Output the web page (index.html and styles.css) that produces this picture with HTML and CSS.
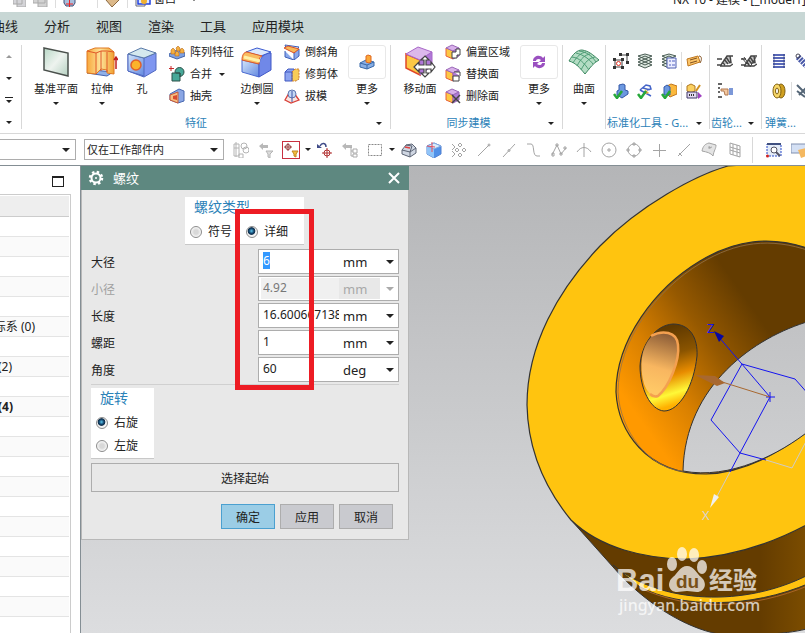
FILE: index.html
```html
<!DOCTYPE html>
<html lang="zh-CN">
<head>
    <meta charset="UTF-8">
    <meta name="viewport" content="width=device-width, initial-scale=1.0">
    <title>NX 10 - 建模</title>
    <link rel="stylesheet" href="styles.css">
</head>
<body>

    <!-- Shared icons -->
    <svg class="defs" width="0" height="0">
        <defs>
            <linearGradient id="blueFace" x1="0" y1="0" x2="1" y2="1">
                <stop offset="0" stop-color="#d4e6fa"/><stop offset="1" stop-color="#6288e0"/>
            </linearGradient>
            <linearGradient id="goldFace" x1="0" y1="0" x2="1" y2="0">
                <stop offset="0" stop-color="#f8a73c"/><stop offset=".5" stop-color="#fde39a"/><stop offset="1" stop-color="#f0a030"/>
            </linearGradient>
            <linearGradient id="greenFace" x1="0" y1="0" x2="1" y2="1">
                <stop offset="0" stop-color="#b8d8c6"/><stop offset=".5" stop-color="#eef3ef"/><stop offset="1" stop-color="#b4d0c0"/>
            </linearGradient>
        </defs>
        <symbol id="caret" viewBox="0 0 6 3"><path d="M0 0h6L3 3z" fill="currentColor"/></symbol>
        <symbol id="caret-big" viewBox="0 0 8 4"><path d="M0 0h8L4 4z" fill="currentColor"/></symbol>
        <symbol id="face" viewBox="0 0 16 16">
            <path d="M1 4l7 3v8l-7-3z" fill="#fdc844" stroke="#e8603c"/>
            <path d="M1 4l6-3 7 3-6 3z" fill="#d8b0ea" stroke="#9a68b8"/>
            <path d="M8 7l6-3v8l-6 3z" fill="#b07cd8" stroke="#9a68b8"/>
        </symbol>
        <symbol id="layers" viewBox="0 0 16 16">
            <path d="M1 12l7-3 7 3-7 3zM1 9l7-3 7 3-7 3zM1 6l7-3 7 3-7 3zM1 3l7-2 7 2-7 3z" fill="#dde8e0" stroke="#4a5c54"/>
        </symbol>
        <symbol id="check" viewBox="0 0 16 16"><path d="M1 11l3 4 5-7" fill="none" stroke="#26a83a" stroke-width="2.5"/></symbol>
        <symbol id="gear-wheel" viewBox="0 0 16 16">
            <path d="M5 11L10 3h4l1 8z" fill="#c4c4c4"/>
            <path d="M0 12h4l6-9h6M3 13h10l3-2M5 9l3 3M7 6l4 5M9 4l4 6M0 6h5M13 3l1 7" fill="none" stroke="#444" stroke-width="1.400"/>
        </symbol>
    </svg>

    <!-- Title bar -->
    <header class="titlebar">
        <div class="quick-tools">
            <svg width="13" height="16" viewBox="0 0 13 16"><path d="M0 3h9v10H0zM4 6h9v10H4z" fill="#d4d4d8" stroke="#aaa"/></svg>
            <svg width="15" height="16" viewBox="0 0 15 16"><path d="M0 3h12v9H0zM5 7h9v9H5z" fill="#d2d2d2" stroke="#aaa"/></svg>
            <i class="divider"></i>
            <svg width="13" height="16" viewBox="0 0 13 16"><path d="M1 5h11v7l-2 3H3l-2-3z" fill="#a9bfdd" stroke="#405078"/><path d="M6.500 6v10M3 13h7" stroke="#e22"/></svg>
            <i class="divider wide"></i>
            <svg width="15" height="16" viewBox="0 0 15 16"><path d="M1 9l6-4 7 4-7 7z" fill="#dcb98a" stroke="#8a6840"/></svg>
            <i class="divider"></i>
            <span class="window-menu">
                <svg width="16" height="16" viewBox="0 0 16 16"><path d="M3 2h12v11H3z" fill="#dfe8ff" stroke="#2040e0" stroke-width="1.500"/><path d="M1 7v8h9v-3" fill="none" stroke="#667"/><circle cx="9" cy="10" r="3" fill="#f0b030"/></svg>
                窗口
            </span>
            <svg class="caret" width="6" height="3"><use href="#caret"/></svg>
        </div>
        <span class="app-title">NX 10 - 建模 - [_model1]</span>
    </header>

    <!-- Menu tabs -->
    <nav class="menu">
        <a href="#" class="cut">曲线</a>
        <a href="#">分析</a>
        <a href="#">视图</a>
        <a href="#">渲染</a>
        <a href="#">工具</a>
        <a href="#">应用模块</a>
    </nav>

    <!-- Ribbon -->
    <div class="ribbon">
        <section class="group gallery">
            <button aria-label="上"><svg class="caret up" width="6" height="3"><use href="#caret"/></svg></button>
            <button aria-label="下"><svg class="caret" width="6" height="3"><use href="#caret"/></svg></button>
            <button aria-label="展开"><svg width="8" height="7" viewBox="0 0 8 7"><path d="M0 0h8v1H0zM1 3h6L4 6z" fill="#222"/></svg></button>
            <button aria-label="选项"><svg class="caret" width="6" height="3"><use href="#caret"/></svg></button>
        </section>

        <section class="group feature">
            <div class="tools">
                <button class="large">
                    <span class="pic"><svg width="32" height="32" viewBox="0 0 32 32"><path d="M4 2l24 5v23L4 24z" fill="url(#greenFace)" stroke="#4a504c" stroke-width="1.500"/></svg></span>
                    <span>基准平面</span>
                    <svg class="caret" width="6" height="3"><use href="#caret"/></svg>
                </button>
                <button class="large">
                    <span class="pic"><svg width="32" height="32" viewBox="0 0 32 32"><path d="M1 27l6-3 20 2-6 4z" fill="#90b0e8" stroke="#4464b0"/><path d="M1 5l8-3h14l5 4v22l-7-1v-3l-6-1-5 5-9-1z" fill="url(#goldFace)" stroke="#e07820"/><path d="M1 5l9 2 5-2h6l7 1M10 7v21M15 5v20M21 6v20" fill="none" stroke="#e05828"/><path d="M30 23V12M28 14l2-3 2 3" fill="none" stroke="#c02020" stroke-width="1.500"/></svg></span>
                    <span>拉伸</span>
                    <svg class="caret" width="6" height="3"><use href="#caret"/></svg>
                </button>
                <button class="large narrow">
                    <span class="pic"><svg width="32" height="32" viewBox="0 0 32 32"><path d="M2 8l16 4 12-5v17l-12 7-16-6z" fill="#7f96f0" stroke="#5068c0"/><path d="M2 8l16 4v18L2 25z" fill="url(#blueFace)" stroke="#5068c0"/><path d="M2 8l13-6 15 5-12 5z" fill="#d4e8ee" stroke="#5878a8"/><circle cx="10" cy="19" r="5" fill="#fbb32c" stroke="#e0602c" stroke-width="1.500"/></svg></span>
                    <span>孔</span>
                </button>
                <div class="stack">
                    <button class="small"><svg width="16" height="16" viewBox="0 0 16 16"><path d="M0 10l8-4 8 3v3l-8 3-8-3z" fill="#7ea0e0" stroke="#4464a8"/><path d="M2 6l2-2 2 2v4H2zM6 9l2-2 2 2v3H6zM7 4l2-2 2 2v3H8zM11 6l2-2 2 2v3h-4z" fill="#f4b040" stroke="#b86c20" stroke-width=".6"/></svg>阵列特征</button>
                    <button class="small"><svg width="16" height="16" viewBox="0 0 16 16"><circle cx="10.500" cy="6" r="4.500" fill="#48a898" stroke="#2c5048"/><path d="M3 7h8v8H3z" fill="#48a898" stroke="#2c5048"/><path d="M7 7h4v4" fill="none" stroke="#2c5048"/><path d="M2 0v5M0 2.500h5" stroke="#c82828"/></svg>合并<svg class="caret" width="6" height="3"><use href="#caret"/></svg></button>
                    <button class="small"><svg width="16" height="16" viewBox="0 0 16 16"><path d="M1 6l9-5 5 2v10l-6 2-8-3z" fill="#8aa6e4" stroke="#4868b0"/><path d="M1 7l8-3v11l-8-3z" fill="#f8c080" stroke="#c85838"/><path d="M4 8l4-1v5l-4-1z" fill="#d84c30"/></svg>抽壳</button>
                </div>
                <button class="large">
                    <span class="pic"><svg width="32" height="32" viewBox="0 0 32 32"><path d="M1 14v12l17 5V18z" fill="url(#blueFace)" stroke="#4868d0"/><path d="M18 18c1-6 5-11 12-11v17l-12 7z" fill="#7088e8" stroke="#4058c8"/><path d="M5 6l11-4 14 4-10 4z" fill="#dce8fc" stroke="#3858d0"/><path d="M1 14c0-5 2-8 5-8l15 4c-3 1-3 4-3 8z" fill="#f9bb60" stroke="#e05828"/><path d="M3 11l16 4" stroke="#fff1a8" stroke-width="3"/></svg></span>
                    <span>边倒圆</span>
                    <svg class="caret" width="6" height="3"><use href="#caret"/></svg>
                </button>
                <div class="stack second">
                    <button class="small"><svg width="16" height="16" viewBox="0 0 16 16"><path d="M1 7v6l9 3V8l5-3v7l-5 4" fill="#8aa8ec" stroke="#4060b8"/><path d="M1 1l14 2-4 4-9-3z" fill="#dce8f8" stroke="#4060b8"/><path d="M0 4l4-2 11 3-5 4z" fill="#f8b858" stroke="#d85028"/></svg>倒斜角</button>
                    <button class="small"><svg width="16" height="16" viewBox="0 0 16 16"><path d="M1 6l3-3h6v10l-2 2H1z" fill="#8ca4f0" stroke="#4058c0"/><path d="M8 6l3-3h4v10l-3 2H8z" fill="#f8cc58" stroke="#c87830" stroke-dasharray="2 1"/><path d="M1 6h7v9" fill="none" stroke="#4058c0"/></svg>修剪体</button>
                    <button class="small"><svg width="16" height="16" viewBox="0 0 16 16"><path d="M5 5L1 12l6 3 8-3-5-7" fill="#f8e4e0" stroke="#d84038" stroke-width="1.300"/><circle cx="8" cy="6" r="4" fill="#c4d8f4" stroke="#6078b0"/><path d="M8 3v11" stroke="#4058a8"/></svg>拔模</button>
                </div>
                <button class="large more">
                    <span class="pic"><svg width="16" height="16" viewBox="0 0 16 16"><path d="M1 9l6-3 8 2v4l-7 3-7-2z" fill="#88aee4" stroke="#3868a8"/><path d="M1 9l7 2 7-3M8 11v4" fill="none" stroke="#3868a8"/><path d="M7 2l2-1 3 1v6l-2 1-3-1z" fill="#fba838" stroke="#e06820"/></svg></span>
                    <span>更多</span>
                    <svg class="caret" width="6" height="3"><use href="#caret"/></svg>
                </button>
            </div>
            <footer><span>特征</span><button aria-label="特征选项"><svg class="caret" width="6" height="3"><use href="#caret"/></svg></button></footer>
        </section>

        <section class="group sync">
            <div class="tools">
                <button class="large">
                    <span class="pic"><svg width="32" height="32" viewBox="0 0 32 32"><path d="M2 8l14 6v15L2 22z" fill="#fdc844" stroke="#e04828" stroke-width="1.500"/><path d="M2 8l12-7 14 5-12 8z" fill="#dcb8ec" stroke="#a868c8"/><path d="M16 14l12-8v14l-12 9z" fill="#b078d8" stroke="#a868c8"/><path d="M21 10l4 4h-3v5h5v-3l4 5-4 5v-3h-5v4h3l-4 4-4-4h3v-4h-5v3l-5-5 5-5v3h5v-5h-3z" fill="#fff" stroke="#444" stroke-width="1.200"/></svg></span>
                    <span>移动面</span>
                </button>
                <div class="stack">
                    <button class="small"><svg width="16" height="16" viewBox="0 0 16 16"><use href="#face"/><path d="M7 8h4V5h4v6h-3v3H7z" fill="#fff" stroke="#444"/></svg>偏置区域</button>
                    <button class="small"><svg width="16" height="16" viewBox="0 0 16 16"><use href="#face"/><path d="M8 10h6v5H8zM9 6h6v4" fill="#fff" stroke="#444"/></svg>替换面</button>
                    <button class="small"><svg width="16" height="16" viewBox="0 0 16 16"><use href="#face"/><path d="M7 7l8 8M15 7l-8 8" stroke="#444" stroke-width="1.500"/></svg>删除面</button>
                </div>
                <button class="large more">
                    <span class="pic"><svg width="16" height="16" viewBox="0 0 16 16"><path d="M2 7c0-5 7-7 10-3l2-2v6H8l2-2C8 4 5 5 5 7zM14 9c0 5-7 7-10 3l-2 2V8h6l-2 2c2 2 5 1 5-1z" fill="#9a50c0"/></svg></span>
                    <span>更多</span>
                    <svg class="caret" width="6" height="3"><use href="#caret"/></svg>
                </button>
            </div>
            <footer><span>同步建模</span><button aria-label="同步建模选项"><svg class="caret" width="6" height="3"><use href="#caret"/></svg></button></footer>
        </section>

        <section class="group surface">
            <div class="tools">
                <button class="large">
                    <span class="pic"><svg width="32" height="32" viewBox="0 0 32 32"><path d="M1 15C5 8 9 4 14 4c7 1 11 5 17 10-6 3-9 8-14 14C12 22 8 17 1 15z" fill="#b4dcc4" stroke="#3c8860"/><path d="M4 11c8 1 12 6 17 13M8 7c8 2 13 6 17 11M11 5c8 1 13 5 17 11M5 17C9 10 13 7 18 6M9 20C13 12 17 9 22 8M13 24c4-8 8-12 14-13" fill="none" stroke="#4c9c74"/></svg></span>
                    <span>曲面</span>
                    <svg class="caret" width="6" height="3"><use href="#caret"/></svg>
                </button>
            </div>
        </section>

        <section class="group standard">
            <div class="tools icon-grid">
                <div class="icon-row">
                    <button aria-label="属性"><svg width="16" height="16" viewBox="0 0 16 16"><path d="M2 7h7v7H2zM8 2h6v7" fill="none" stroke="#444"/><path d="M0 5h3v3H0zM8 5h3v3H8zM0 13h3v3H0zM8 13h3v3H8zM6 0h3v3H6zM13 0h3v3h-3zM13 8h3v3h-3z" fill="#333"/><circle cx="5.500" cy="10.500" r="2" fill="#fff" stroke="#e03020"/></svg></button>
                    <button aria-label="图层"><svg width="16" height="16"><use href="#layers"/></svg></button>
                    <button aria-label="图层设置"><svg width="16" height="16" viewBox="0 0 16 16"><use href="#layers"/><path d="M6 5h9v10H6z" fill="#eceeff" stroke="#5060b0"/><path d="M8 8h2M11 8h3M8 12h2M11 12h3" stroke="#5060c0"/></svg></button>
                    <i class="divider"></i>
                    <button aria-label="注释"><svg width="16" height="16" viewBox="0 0 16 16"><path d="M1 6l11-3 2 6-12 4z" fill="#fbc468" stroke="#c07820"/><path d="M4 7l7-2M4 10l7-2M13 3c3 0 3 4 1 7" fill="none" stroke="#805020"/></svg></button>
                </div>
                <div class="icon-row">
                    <button aria-label="检查部件"><svg width="16" height="16" viewBox="0 0 16 16"><path d="M6 2l4-1 2 1v5l3 1v3l-6 4-5-3V8l2-1z" fill="#6c98e0" stroke="#3458a8"/><use href="#check"/></svg></button>
                    <button aria-label="检查尺寸"><svg width="16" height="16" viewBox="0 0 16 16"><path d="M3 7l6-5 4 1 1 3-4 1M3 7l11 6M6 5l7 2" fill="none" stroke="#4464c8" stroke-width="1.500"/><path d="M8 6l4 4-3 1z" fill="#f0b040"/><use href="#check"/></svg></button>
                    <button aria-label="检查装配"><svg width="16" height="16" viewBox="0 0 16 16"><path d="M6 3l4-2 6 2v8l-7 3-3-3z" fill="#fbb83c" stroke="#c07820"/><path d="M3 4l3-2 3 2v8H3z" fill="#6c98e0" stroke="#3458a8"/><use href="#check"/></svg></button>
                    <i class="divider"></i>
                    <button aria-label="重命名"><svg width="16" height="16" viewBox="0 0 16 16"><path d="M1 3l4-2 4 2v5l-4 2-4-2z" fill="#fbd060" stroke="#b07820"/><path d="M10 8l4-6" stroke="#d09020" stroke-width="2"/><path d="M1 9h10v6H1z" fill="#e0d8f0" stroke="#403868"/><path d="M3 12h6" stroke="#333" stroke-width="2" stroke-dasharray="1 1"/><path d="M12 9l4 4-4 3z" fill="#a040c0"/></svg></button>
                </div>
            </div>
            <footer><span>标准化工具 - G...</span><button aria-label="标准化工具选项"><svg class="caret" width="6" height="3"><use href="#caret"/></svg></button></footer>
        </section>

        <section class="group gear">
            <div class="tools icon-grid">
                <div class="icon-row">
                    <button aria-label="圆柱齿轮"><svg width="16" height="16"><use href="#gear-wheel"/></svg></button>
                    <button aria-label="锥齿轮"><svg width="16" height="16" viewBox="0 0 16 16"><use href="#gear-wheel"/><path d="M1 5l5 6M3 4l6 9M15 4L9 14" stroke="#444"/></svg></button>
                </div>
                <div class="icon-row">
                    <button aria-label="齿轮列表"><svg width="16" height="16" viewBox="0 0 16 16"><path d="M1 1h4M1 5h2M1 9h2M1 14h4" stroke="#333" stroke-width="1.500"/><path d="M4 6h7v6H8L7 8H4z" fill="#f4c8a0" stroke="#b07850"/><path d="M12 5h4v7h-4z" fill="#7c98d8"/></svg></button>
                </div>
            </div>
            <footer><span>齿轮...</span><button aria-label="齿轮选项"><svg class="caret" width="6" height="3"><use href="#caret"/></svg></button></footer>
        </section>

        <section class="group spring">
            <div class="tools icon-grid">
                <div class="icon-row">
                    <button aria-label="圆柱压缩弹簧"><svg width="16" height="16" viewBox="0 0 16 16"><path d="M2 2h12M2 5h12M2 8h12M2 11h12M2 14h12" stroke="#5868b8" stroke-width="2"/><path d="M3 1v14M13 1v14" stroke="#303c78" stroke-width=".7"/></svg></button>
                    <button aria-label="圆柱拉伸弹簧"><svg width="16" height="16" viewBox="0 0 16 16"><path d="M3 4l10 10" stroke="#4858a8" stroke-width="6" stroke-dasharray="2 1"/><circle cx="3" cy="3" r="2" fill="none" stroke="#445"/></svg></button>
                </div>
                <div class="icon-row">
                    <button aria-label="碟形弹簧"><svg width="16" height="16" viewBox="0 0 16 16"><ellipse cx="10" cy="8" rx="4" ry="7" fill="#d0a020" stroke="#806010"/><ellipse cx="6" cy="8" rx="4" ry="7" fill="#f8d868" stroke="#806010"/><ellipse cx="6" cy="8" rx="1.500" ry="3" fill="#fff" stroke="#806010"/></svg></button>
                    <i class="divider"></i>
                    <button aria-label="删除弹簧"><svg width="16" height="16" viewBox="0 0 16 16"><path d="M1 2l12 12M1 8l8 6M13 2L3 12" stroke="#567" stroke-width="2"/></svg></button>
                </div>
            </div>
            <footer><span>弹簧...</span></footer>
        </section>
    </div>

    <!-- Selection bar -->
    <div class="selection-bar">
        <div class="combo filter-combo">
            <select aria-label="选择过滤器"><option></option></select>
            <svg class="caret" width="8" height="4"><use href="#caret-big"/></svg>
        </div>
        <div class="combo scope-combo">
            <select aria-label="选择范围"><option>仅在工作部件内</option></select>
            <svg class="caret" width="8" height="4"><use href="#caret-big"/></svg>
        </div>
        <div class="bar-icons first">
            <button aria-label="装配选择"><svg width="16" height="16" viewBox="0 0 16 16"><path d="M1 2h5v12H1zM1 6h5M3 0v15M6 12h4v4H6z" fill="none" stroke="#b4b4b4"/><circle cx="11" cy="4" r="3" fill="none" stroke="#b4b4b4"/><circle cx="13" cy="8" r="3" fill="none" stroke="#b4b4b4"/></svg></button>
            <button aria-label="重置过滤器"><svg width="16" height="16" viewBox="0 0 16 16"><path d="M1 4l4-3v2h5v3H5v2z" fill="#b8b8b8"/><path d="M8 9h7l-3 3v4l-2-1v-3z" fill="#ddd" stroke="#b4b4b4"/></svg></button>
            <button aria-label="允许选择" class="active"><svg width="16" height="16" viewBox="0 0 16 16"><circle cx="5" cy="5" r="2.500" fill="none" stroke="#8c4040"/><path d="M5 1v8M1 5h8" stroke="#a04040"/><path d="M9 9h6l-2 3v3l-2-1v-2z" fill="#f4c040" stroke="#c08820"/></svg></button>
            <button aria-label="更多选择" class="drop"><svg class="caret" width="6" height="3"><use href="#caret"/></svg></button>
            <button aria-label="光标选择"><svg width="16" height="16" viewBox="0 0 16 16"><path d="M3 4c2-4 6-3 6 1" fill="none" stroke="#404c88" stroke-width="1.500"/><path d="M0 2v4h5z" fill="#404c88"/><circle cx="10" cy="11" r="3" fill="none" stroke="#b03030"/><path d="M10 6v10M5 11h10" stroke="#b03030"/></svg></button>
            <button aria-label="向上选择"><svg width="16" height="16" viewBox="0 0 16 16"><path d="M0 4l4-3v2h6v3H4v2z" fill="#b8b8b8"/><path d="M9 5v9h2M9 9h2M11 7h4v4h-4zM11 12h4v3h-4z" fill="none" stroke="#aaa"/></svg></button>
            <button aria-label="矩形选择"><svg width="16" height="16" viewBox="0 0 16 16"><path d="M1.500 2.500h13v11h-13z" fill="none" stroke="#888" stroke-dasharray="2 1"/></svg></button>
            <button aria-label="选择形状" class="drop"><svg class="caret" width="6" height="3"><use href="#caret"/></svg></button>
        </div>
        <div class="bar-icons">
            <button aria-label="显示面"><svg width="16" height="16" viewBox="0 0 16 16"><path d="M1 8l4-5 6-1 4 4v5l-6 4-8-3z" fill="#cfd6e2" stroke="#5c6474"/><path d="M1 8l8 2 6-4M9 10v5M5 3l6 1-2 6" fill="none" stroke="#5c6474"/><path d="M4 5l5 1" stroke="#e04040" stroke-width="1.500"/></svg></button>
            <button aria-label="显示体"><svg width="16" height="16" viewBox="0 0 16 16"><path d="M1 4l7-3 7 3v8l-7 4-7-4z" fill="#5090e8" stroke="#5080d0"/><path d="M1 4l7 3v9l-7-4z" fill="#90c4f8"/><path d="M1 4l7-3 7 3-7 3z" fill="#d8ecfc" stroke="#80a8e0"/><path d="M6 0v10M1 4l8 1" stroke="#e05060"/></svg></button>
        </div>
        <div class="bar-icons snaps">
            <button aria-label="捕捉点"><svg width="16" height="16" viewBox="0 0 16 16"><path d="M1 2l3 3-3 3M1 9l3 3-3 3M9 1l2 2-2 2-2-2zM9 11l2 2-2 2-2-2zM6 6l2 2-2 2-2-2zM13 6l2 2-2 2-2-2z"/></svg></button>
            <button aria-label="端点"><svg width="16" height="16" viewBox="0 0 16 16"><path d="M2 14L13 3"/><circle cx="13" cy="3" r="1"/></svg></button>
            <button aria-label="中点"><svg width="16" height="16" viewBox="0 0 16 16"><path d="M2 15L14 2"/><circle cx="8" cy="8.500" r="1"/></svg></button>
            <button aria-label="控制点"><svg width="16" height="16" viewBox="0 0 16 16"><path d="M1 2h4c4 0 1 12 6 12h3"/></svg></button>
            <button aria-label="极点"><svg width="16" height="16" viewBox="0 0 16 16"><path d="M1 13l5-10 4 9 5-6M1 11h2v3H1zM5 2h2v2H5zM9 11h2v2H9zM13 5h2v2h-2z"/></svg></button>
            <button aria-label="交点"><svg width="16" height="16" viewBox="0 0 16 16"><path d="M8 1v14M1 10c4-6 10-6 14 0"/></svg></button>
            <button aria-label="圆弧中心"><svg width="16" height="16" viewBox="0 0 16 16"><circle cx="8" cy="8" r="7"/><path d="M8 6v4M6 8h4"/></svg></button>
            <button aria-label="象限点"><svg width="16" height="16" viewBox="0 0 16 16"><circle cx="8" cy="8" r="6"/><path d="M7 1h2v2H7zM7 13h2v2H7zM1 7h2v2H1zM13 7h2v2h-2z"/></svg></button>
            <button aria-label="现有点"><svg width="16" height="16" viewBox="0 0 16 16"><path d="M8.500 2v13M2 8.500h13"/></svg></button>
            <button aria-label="曲线上的点"><svg width="16" height="16" viewBox="0 0 16 16"><path d="M2 14L14 2M3 11l3 3"/></svg></button>
            <button aria-label="面上的点"><svg width="16" height="16" viewBox="0 0 16 16"><path d="M1 9c1-5 3-7 7-8l7 2c0 4-2 5-3 11-2-3-6-4-11-5z" fill="#e4e4e4"/><path d="M7 6l4-1M8 4l1 3"/></svg></button>
            <button aria-label="栅格"><svg width="16" height="16" viewBox="0 0 16 16"><path d="M4 1l10 3v11L4 12zM7 2v11M11 3v11M4 5l10 3M4 8l10 3"/></svg></button>
        </div>
        <div class="bar-icons view-tools">
            <button aria-label="缩放"><svg width="16" height="16" viewBox="0 0 16 16"><path d="M1 2h14v12H1z" fill="#e4ecf8" stroke="#2848c8" stroke-dasharray="2 1"/><path d="M1 2h14" stroke="#405080" stroke-width="2"/><circle cx="8" cy="8" r="3" fill="#fff" stroke="#556"/><path d="M10 10l4 4" stroke="#556" stroke-width="2"/><circle cx="1.500" cy="14" r="1.500" fill="#d02020"/></svg></button>
            <button aria-label="平移"><svg width="16" height="16" viewBox="0 0 16 16"><path d="M0 2h15v9H0z" fill="#d4e0f4" stroke="#8090b0"/><path d="M7 8l8-2v8l-5 2z" fill="#f4b860"/></svg></button>
        </div>
    </div>

    <main class="workspace">
        <!-- Part navigator -->
        <aside class="navigator">
            <div class="nav-head"><button aria-label="最大化"></button></div>
            <ul class="tree">
                <li class="tree-head"></li>
                <li></li><li></li><li></li><li></li><li></li>
                <li class="datum">标系 (0)</li>
                <li></li>
                <li class="sketch">(2)</li>
                <li></li>
                <li class="body-item">(4)</li>
                <li></li><li></li><li></li><li></li><li></li>
                <li></li><li></li><li></li><li></li><li></li>
            </ul>
        </aside>

        <div class="viewport">
            <svg class="model" viewBox="81 166 724 467" preserveAspectRatio="xMinYMin slice">
                <defs>
                    <linearGradient id="sky" gradientUnits="userSpaceOnUse" x1="0" y1="166" x2="0" y2="633">
                        <stop offset="0" stop-color="#b4b5b7"/><stop offset="1" stop-color="#dcdddf"/>
                    </linearGradient>
                    <linearGradient id="bore" gradientUnits="userSpaceOnUse" x1="640" y1="420" x2="768" y2="330">
                        <stop offset="0" stop-color="#ff9900"/><stop offset=".3" stop-color="#d98000"/><stop offset=".65" stop-color="#965900"/><stop offset="1" stop-color="#643c00"/>
                    </linearGradient>
                    <linearGradient id="pocket" gradientUnits="userSpaceOnUse" x1="668" y1="328" x2="690" y2="400">
                        <stop offset="0" stop-color="#5f3900"/><stop offset=".35" stop-color="#8a5400"/><stop offset=".62" stop-color="#e88c00"/><stop offset=".85" stop-color="#fff838"/><stop offset="1" stop-color="#ffb000"/>
                    </linearGradient>
                    <linearGradient id="plug" gradientUnits="userSpaceOnUse" x1="668" y1="335" x2="652" y2="390">
                        <stop offset="0" stop-color="#8f5f38"/><stop offset=".6" stop-color="#f8b660"/><stop offset="1" stop-color="#ffc866"/>
                    </linearGradient>
                    <linearGradient id="rim" gradientUnits="userSpaceOnUse" x1="760" y1="0" x2="815" y2="0">
                        <stop offset="0" stop-color="#643c00"/><stop offset="1" stop-color="#805000"/>
                    </linearGradient>
                </defs>
                <rect x="81" y="166" width="2000" height="2000" fill="url(#sky)"/>
                <!-- outer side of the ring -->
                <path d="M571 520L622 577C650 605 684 627 718 634C755 636 790 634 810 628V510H600z" fill="url(#rim)" stroke="#333"/>
                <path d="M613 565C660 604 745 608 810 574V583C750 609 680 608 640 587z" fill="#ffc20f" stroke="#333"/>
                <path d="M640 588C690 611 750 610 810 585" fill="none" stroke="#a86428"/>
                <!-- front face -->
                <path d="M728 166C696 175 640 205 600 246C558 290 527 345 527 405C528 455 548 492 571 520C600 548 645 559 687 559C730 557 770 545 810 523V160z" fill="#ffc40f" stroke="#333" stroke-width="1.200"/>
                <path d="M810 249C770 235 735 240 700 261C655 288 616 340 616 392C618 430 645 474 706 474C745 473 780 452 810 430z" fill="url(#bore)" stroke="#333" stroke-width="1.200"/>
                <path d="M810 251C770 237 736 242 701 263C656 290 618 341 618 392C620 430 648 471 690 472" fill="none" stroke="#94724a" stroke-width=".8"/>
                <path d="M810 321C755 337 685 385 683 471C730 480 780 454 810 430z" fill="url(#sky)" stroke="#333"/>
                <path d="M673 324C690 324 698 338 697 356C694 385 680 411 664 411C650 410 640 388 640 366C641 345 655 325 673 324z" fill="url(#pocket)" stroke="#333"/>
                <path d="M651 337C662 329 677 331 678 345C680 360 669 387 658 396C652 397 647 392 644 384C639 366 641 348 651 337z" fill="url(#plug)"/>
                <path d="M651 336C662 330 677 331 678 345C680 360 669 387 658 396C655 397 652 396 650 394" fill="none" stroke="#f4a050" stroke-width="2.500"/>
                <!-- datum axes -->
                <g fill="none" stroke="#1414f0">
                    <path d="M718 336L770 397L740 453L711 420L742 364L795 379L810 396M740 453L766 460M740 453L730 472M766 397h9M770 392v10"/>
                    <path d="M730 472L715 500M766 460L792 468L810 434" stroke="#d0ccc8"/>
                    <path d="M719 381L770 397" stroke="#a86830"/>
                </g>
                <path d="M714 331l10 5-5 6z" fill="#0808a0"/>
                <path d="M695 375l20 1 10 7-8 3z" fill="#a86830"/>
                <path d="M714 494l5 3-9 11z" fill="#f0f0f0"/>
                <text x="707" y="333" class="axis" fill="#1414f0">Z</text>
                <text x="702" y="520" class="axis" fill="#d8d4d0">X</text>
                <!-- watermark -->
                <g fill="#fff" opacity=".72">
                    <text x="616" y="591" class="mark-latin">Bai</text>
                    <ellipse cx="672" cy="564" rx="5" ry="7"/>
                    <ellipse cx="682" cy="554" rx="5" ry="7"/>
                    <ellipse cx="694" cy="555" rx="5" ry="7"/>
                    <ellipse cx="702" cy="567" rx="5" ry="7"/>
                    <path d="M687 566c7 0 9 7 14 11 7 6 4 15-4 15-4 0-6-1-10-1s-6 1-10 1c-8 0-11-9-4-15 5-4 7-11 14-11z"/>
                    <text x="709" y="589" class="mark-cn">经验</text>
                    <text x="619" y="611" class="mark-url">jingyan.baidu.com</text>
                </g>
                <text x="676" y="588" class="mark-du" fill="#785018">du</text>
            </svg>

            <!-- Thread dialog -->
            <form class="dialog">
                <div class="dialog-title">
                    <svg width="16" height="16" viewBox="0 0 16 16"><circle cx="8" cy="8" r="4.500" fill="none" stroke="#fff" stroke-width="2"/><circle cx="8" cy="8" r="6" fill="none" stroke="#fff" stroke-width="2.500" stroke-dasharray="2.400 2.312"/><circle cx="8" cy="8" r="1" fill="#fff"/></svg>
                    <h1>螺纹</h1>
                    <button type="button" aria-label="关闭"><svg width="12" height="12" viewBox="0 0 12 12"><path d="M1 1l10 10M11 1L1 11" stroke="#fff" stroke-width="2"/></svg></button>
                </div>
                <div class="dialog-body">
                    <fieldset class="card type-card">
                        <h2>螺纹类型</h2>
                        <div class="radio-row">
                            <label><input type="radio" name="type">符号</label>
                            <label><input type="radio" name="type" checked>详细</label>
                        </div>
                    </fieldset>

                    <div class="fields">
                        <div class="field">
                            <label for="major">大径</label>
                            <div class="value">
                                <input type="text" id="major" value="6">
                                <select aria-label="大径单位"><option>mm</option></select>
                                <svg class="caret" width="8" height="4"><use href="#caret-big"/></svg>
                            </div>
                        </div>
                        <div class="field disabled">
                            <label for="minor">小径</label>
                            <div class="value">
                                <input type="text" id="minor" value="4.92" disabled>
                                <select aria-label="小径单位" disabled><option>mm</option></select>
                                <svg class="caret" width="8" height="4"><use href="#caret-big"/></svg>
                            </div>
                        </div>
                        <div class="field">
                            <label for="length">长度</label>
                            <div class="value">
                                <input type="text" id="length" value="16.600667138">
                                <select aria-label="长度单位"><option>mm</option></select>
                                <svg class="caret" width="8" height="4"><use href="#caret-big"/></svg>
                            </div>
                        </div>
                        <div class="field">
                            <label for="pitch">螺距</label>
                            <div class="value">
                                <input type="text" id="pitch" value="1">
                                <select aria-label="螺距单位"><option>mm</option></select>
                                <svg class="caret" width="8" height="4"><use href="#caret-big"/></svg>
                            </div>
                        </div>
                        <div class="field">
                            <label for="angle">角度</label>
                            <div class="value">
                                <input type="text" id="angle" value="60">
                                <select aria-label="角度单位"><option>deg</option></select>
                                <svg class="caret" width="8" height="4"><use href="#caret-big"/></svg>
                            </div>
                        </div>
                    </div>

                    <fieldset class="card turn-card">
                        <h2>旋转</h2>
                        <label><input type="radio" name="turn" checked>右旋</label>
                        <label><input type="radio" name="turn">左旋</label>
                    </fieldset>

                    <button type="button" class="start-button">选择起始</button>

                    <div class="actions">
                        <button type="submit" class="primary">确定</button>
                        <button type="button">应用</button>
                        <button type="button">取消</button>
                    </div>
                </div>
                <div class="highlight"></div>
            </form>
        </div>
    </main>

    <script>
        // Start with the first value selected, ready to be typed over
        const major = document.getElementById('major');
        major.focus();
        major.select();
    </script>

</body>
</html>
```

FILE: styles.css
```css
* {
    box-sizing: border-box;
}
body {
    margin: 0;
    height: 100vh;
    display: flex;
    flex-direction: column;
    overflow: hidden;
    background: #fff;
    color: #222;
    font-family: "Noto Sans", "Noto Sans CJK SC", sans-serif;
    font-size: 12px;
}
button, input, select {
    font: inherit;
    color: inherit;
    margin: 0;
}
button {
    padding: 0;
    border: none;
    background: none;
}
svg {
    flex: none;
}
.defs {
    position: absolute;
}
.caret {
    color: #222;
}
.divider {
    width: 1px;
    height: 18px;
    background: #ddd;
}

/* Title bar */
.titlebar {
    height: 12px;
    flex: none;
    display: flex;
    align-items: flex-end;
    justify-content: space-between;
    overflow: hidden;
    padding-bottom: 4px;
    line-height: 16px;
    white-space: nowrap;
}
.quick-tools {
    display: flex;
    align-items: center;
    gap: 7px;
    padding-left: 13px;
    font-size: 11px;
}
.quick-tools .divider.wide {
    margin-left: 14px;
}
.quick-tools .caret {
    margin-left: 8px;
}
.window-menu {
    display: flex;
    gap: 3px;
}
.app-title {
    width: 132px;
    flex: none;
}

/* Menu tabs */
.menu {
    height: 28px;
    flex: none;
    display: flex;
    align-items: center;
    gap: 26px;
    background: #c8d7d5;
    font-size: 13px;
    line-height: 28px;
}
.menu a {
    color: #222;
    text-decoration: none;
}
.menu .cut {
    width: 18px;
    display: flex;
    justify-content: flex-end;
    overflow: hidden;
    white-space: nowrap;
}

/* Ribbon */
.ribbon {
    flex: none;
    display: flex;
    padding: 5px 0 4px;
    border-bottom: 1px solid #d8d8d8;
    overflow: hidden;
    font-size: 11px;
    white-space: nowrap;
}
.group {
    flex: none;
    display: flex;
    flex-direction: column;
    border-right: 1px solid #d8d8d8;
}
.gallery {
    width: 22px;
    justify-content: space-between;
    padding: 4px 4px 0 0;
}
.gallery button {
    height: 14px;
    display: flex;
    align-items: center;
    justify-content: center;
}
.up {
    transform: rotate(180deg);
    color: #999;
}
.feature {
    width: 369px;
    padding-left: 11px;
}
.sync {
    width: 172px;
    padding-left: 6px;
}
.surface {
    width: 43px;
}
.standard {
    width: 104px;
    padding-left: 1px;
}
.gear {
    width: 52px;
    padding-left: 1px;
}
.spring {
    width: 120px;
    padding-left: 3px;
    border-right: none;
}
.tools {
    height: 72px;
    display: flex;
}
.group footer {
    display: flex;
    height: 12px;
    align-items: center;
    line-height: 12px;
    color: #2c82b8;
}
.group footer span {
    flex: 1;
}
.feature footer, .sync footer {
    text-align: center;
}
.group footer button {
    width: 22px;
    display: flex;
    justify-content: center;
}
.feature footer {
    margin-left: -9px;
}
.large {
    width: 46px;
    display: flex;
    flex-direction: column;
    align-items: center;
    line-height: 20px;
}
.large.narrow {
    width: 34px;
}
.surface .large {
    width: 42px;
}
.pic {
    width: 38px;
    height: 34px;
    display: flex;
    align-items: center;
    justify-content: center;
}
.large .caret {
    margin-top: 3px;
}
.more {
    width: 38px;
    margin-left: 10px;
}
.more .pic {
    border: 1px solid #e8e8e8;
    border-radius: 3px;
}
.stack {
    display: flex;
    flex-direction: column;
    gap: 8px;
    margin-left: 10px;
}
.stack.second {
    margin-left: 4px;
}
.sync .stack {
    margin-left: 2px;
}
.small {
    height: 14px;
    display: flex;
    align-items: center;
    gap: 5px;
    line-height: 14px;
}
.small .caret {
    margin-left: 2px;
}
.icon-grid {
    flex-direction: column;
    padding: 1px 0 0 2px;
}
.icon-row {
    height: 30px;
    display: flex;
    align-items: center;
}
.icon-row button {
    width: 24px;
    height: 24px;
    display: flex;
    align-items: center;
    justify-content: center;
}

/* Selection bar */
.selection-bar {
    height: 31px;
    flex: none;
    display: flex;
    align-items: center;
    overflow: hidden;
}
.combo {
    height: 21px;
    flex: none;
    display: flex;
    align-items: center;
    border: 1px solid #adadad;
    padding-right: 5px;
    font-size: 11px;
}
.combo select {
    flex: 1;
    height: 19px;
    min-width: 0;
    appearance: none;
    border: none;
    background: none;
    padding: 0 2px;
    line-height: 16px;
}
.filter-combo {
    width: 77px;
    margin-left: -1px;
}
.scope-combo {
    width: 140px;
    margin-left: 8px;
}
.bar-icons {
    display: flex;
    flex: none;
}
.bar-icons.first {
    margin-left: 4px;
}
.bar-icons button {
    width: 25px;
    height: 18px;
    display: flex;
    align-items: center;
    justify-content: center;
}
.bar-icons .drop {
    width: 9px;
}
.bar-icons .active svg {
    outline: 1px solid #c83040;
}
.snaps svg {
    fill: none;
    stroke: #a4a4a4;
}
.view-tools {
    margin-left: 6px;
    padding-left: 8px;
    border-left: 1px solid #d8d8d8;
}
.view-tools button {
    height: 26px;
}

/* Workspace */
.workspace {
    flex: 1;
    min-height: 0;
    display: flex;
    border-top: 1px solid #848e94;
}
.navigator {
    width: 80px;
    flex: none;
    display: flex;
    flex-direction: column;
}
.nav-head {
    height: 28px;
    flex: none;
    display: flex;
    justify-content: flex-end;
    padding: 10px 16px 0 0;
}
.nav-head button {
    width: 12px;
    height: 11px;
    border: 1px solid #222;
    border-top-width: 2px;
}
.tree {
    flex: 1;
    min-height: 0;
    overflow: hidden;
    list-style: none;
    margin: 0 9px 0 0;
    padding: 1px 1px 0 0;
    border: solid #ccc;
    border-width: 1px 1px 0 0;
}
.tree li {
    height: 20px;
    display: flex;
    justify-content: flex-end;
    overflow: hidden;
    border-bottom: 1px solid #e4e4e4;
    line-height: 19px;
    white-space: nowrap;
}
.tree li:nth-child(odd) {
    background: #fafafa;
}
.tree .tree-head:first-child {
    height: 21px;
    background: #eee;
    border-color: #ccc;
}
.datum {
    padding-right: 34px;
}
.sketch {
    padding-right: 57px;
}
.body-item {
    padding-right: 56px;
    font-weight: bold;
}
.viewport {
    flex: 1;
    min-width: 0;
    position: relative;
    overflow: hidden;
    border-left: 1px solid #848e94;
}
.model {
    display: block;
    width: 100%;
    height: 100%;
}
.axis {
    font-size: 13px;
}
.mark-latin {
    font: bold 31px "Liberation Sans", sans-serif;
}
.mark-du {
    font: bold 19px "Liberation Sans", sans-serif;
}
.mark-cn {
    font-size: 24px;
    font-weight: bold;
}
.mark-url {
    font-size: 16px;
    font-weight: 500;
}

/* Thread dialog, floats over the model */
.dialog {
    position: absolute;
    top: 0;
    left: 0;
    width: 328px;
}
.dialog-title {
    height: 24px;
    display: flex;
    align-items: center;
    gap: 9px;
    padding: 0 9px 0 7px;
    background: #5e8880;
    color: #fff;
}
.dialog-title h1 {
    flex: 1;
    margin: 0;
    font-size: 13px;
    font-weight: normal;
    line-height: 24px;
}
.dialog-title button {
    height: 12px;
    display: flex;
}
.dialog-body {
    display: flex;
    flex-direction: column;
    padding: 7px 9px 10px;
    background: #e8e8e8;
    border: 1px solid #b8b8b8;
    border-top: none;
}
.card {
    min-width: 0;
    margin: 0;
    border: none;
    background: #fff;
    border-bottom: 1px solid #c8c8c8;
}
.card h2 {
    margin: 0;
    color: #2c82b8;
    font-size: 14px;
    font-weight: normal;
    line-height: 20px;
}
.card label {
    display: flex;
    align-items: center;
    gap: 6px;
    line-height: 23px;
}
.type-card {
    width: 119px;
    margin-left: 94px;
    padding: 0 5px 1px;
}
.type-card h2 {
    padding-left: 4px;
}
.radio-row {
    display: flex;
    gap: 14px;
    padding-top: 3px;
}
.turn-card {
    width: 63px;
    margin-top: 3px;
    padding: 0 5px 1px;
}
.turn-card h2 {
    padding: 0 0 3px 4px;
}
input[type="radio"] {
    appearance: none;
    width: 12px;
    height: 12px;
    border: 1px solid #8c8c8c;
    border-radius: 50%;
    background: radial-gradient(circle, #d8d8d8 30%, #f8f8f8 70%);
}
input[type="radio"]:checked {
    background: radial-gradient(circle at 45% 40%, #5cc8f0 0, #12446c 30%, #12304c 42%, #f4f4f4 52%);
}
.fields {
    display: flex;
    flex-direction: column;
    gap: 2px;
    margin-top: 4px;
    padding-bottom: 2px;
    border-bottom: 1px solid #d0d0d0;
}
.field {
    display: flex;
    justify-content: space-between;
    align-items: center;
}
.value {
    width: 141px;
    height: 25px;
    display: flex;
    align-items: center;
    padding-right: 4px;
    background: #fff;
    border: 1px solid #adadad;
}
.value input {
    width: 80px;
    height: 23px;
    padding: 0 0 2px 4px;
    border: none;
    outline: none;
    background: none;
}
.value input::selection {
    background: #3399ff;
    color: #fff;
}
.value select {
    flex: 1;
    min-width: 0;
    height: 21px;
    padding: 0 4px;
    appearance: none;
    border: none;
    background: none;
    font-size: 13px;
    opacity: 1;
}
.value .caret {
    margin-left: 6px;
}
.disabled label {
    color: #a0a0a0;
}
.value input:disabled {
    height: 21px;
    padding: 0 0 2px 2px;
    background: #f0f0f0;
    border-left: 2px solid #fff;
    color: #777;
}
.value select:disabled {
    background: #e8e8e8;
    color: #a8a8a8;
}
.disabled .caret {
    color: #aaa;
}
.start-button {
    height: 29px;
    margin-top: 4px;
    border: 1px solid #adadad;
}
.actions {
    display: flex;
    justify-content: flex-end;
    gap: 5px;
    margin-top: 12px;
    padding-right: 6px;
}
.actions button {
    width: 54px;
    height: 25px;
    border: 1px solid #adadad;
    background: #c9cacf;
}
.actions .primary {
    border-color: #4ba0d0;
    background: #9bcde6;
}
/* Red frame round the values being edited */
.highlight {
    position: absolute;
    top: 43px;
    left: 154px;
    width: 79px;
    height: 181px;
    border: 5px solid #ed1c24;
}
```
